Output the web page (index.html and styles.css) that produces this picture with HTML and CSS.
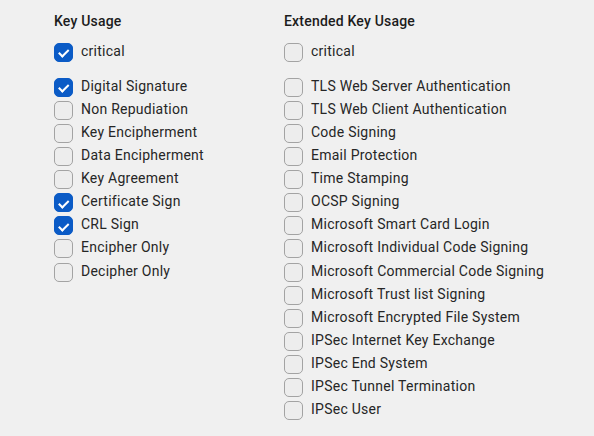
FILE: index.html
```html
<!DOCTYPE html>
<html>
<head>
<meta charset="utf-8">
<link rel="stylesheet" href="styles.css">
</head>
<body>
<div class="page">
  <section class="col col-left">
    <h2 class="title">Key Usage</h2>
    <label class="row crit"><span class="cb on"></span><span class="lbl">critical</span></label>
    <label class="row"><span class="cb on"></span><span class="lbl">Digital Signature</span></label>
    <label class="row"><span class="cb"></span><span class="lbl">Non Repudiation</span></label>
    <label class="row"><span class="cb"></span><span class="lbl">Key Encipherment</span></label>
    <label class="row"><span class="cb"></span><span class="lbl">Data Encipherment</span></label>
    <label class="row"><span class="cb"></span><span class="lbl">Key Agreement</span></label>
    <label class="row"><span class="cb on"></span><span class="lbl">Certificate Sign</span></label>
    <label class="row"><span class="cb on"></span><span class="lbl">CRL Sign</span></label>
    <label class="row"><span class="cb"></span><span class="lbl">Encipher Only</span></label>
    <label class="row"><span class="cb"></span><span class="lbl">Decipher Only</span></label>
  </section>
  <section class="col col-right">
    <h2 class="title">Extended Key Usage</h2>
    <label class="row crit"><span class="cb"></span><span class="lbl">critical</span></label>
    <label class="row"><span class="cb"></span><span class="lbl">TLS Web Server Authentication</span></label>
    <label class="row"><span class="cb"></span><span class="lbl">TLS Web Client Authentication</span></label>
    <label class="row"><span class="cb"></span><span class="lbl">Code Signing</span></label>
    <label class="row"><span class="cb"></span><span class="lbl">Email Protection</span></label>
    <label class="row"><span class="cb"></span><span class="lbl">Time Stamping</span></label>
    <label class="row"><span class="cb"></span><span class="lbl">OCSP Signing</span></label>
    <label class="row"><span class="cb"></span><span class="lbl">Microsoft Smart Card Login</span></label>
    <label class="row"><span class="cb"></span><span class="lbl">Microsoft Individual Code Signing</span></label>
    <label class="row"><span class="cb"></span><span class="lbl">Microsoft Commercial Code Signing</span></label>
    <label class="row"><span class="cb"></span><span class="lbl">Microsoft Trust list Signing</span></label>
    <label class="row"><span class="cb"></span><span class="lbl">Microsoft Encrypted File System</span></label>
    <label class="row"><span class="cb"></span><span class="lbl">IPSec Internet Key Exchange</span></label>
    <label class="row"><span class="cb"></span><span class="lbl">IPSec End System</span></label>
    <label class="row"><span class="cb"></span><span class="lbl">IPSec Tunnel Termination</span></label>
    <label class="row"><span class="cb"></span><span class="lbl">IPSec User</span></label>
  </section>
</div>
</body>
</html>
```
FILE: styles.css
```css
html, body {
  margin: 0;
  padding: 0;
  background: #f0f0f0;
}
body {
  font-family: Roboto, "Liberation Sans", sans-serif;
  font-size: 14px;
  color: #262626;
  width: 594px;
  height: 436px;
  overflow: hidden;
}
.page {
  display: flex;
  padding: 11px 0 0 54px;
}
.col {
  display: flex;
  flex-direction: column;
}
.col-left {
  width: 230px;
}
.title {
  margin: 0 0 8px 0;
  font-size: 14px;
  font-weight: 500;
  line-height: 20px;
  color: #1c1c1c;
  letter-spacing: 0.2px;
}
.row {
  display: flex;
  align-items: center;
  height: 23.12px;
  gap: 8px;
}
.row.crit {
  margin-bottom: 12px;
}
.cb {
  box-sizing: border-box;
  width: 19px;
  height: 19px;
  margin-top: 3px;
  border: 1px solid #a3a3a3;
  border-radius: 5px;
  background: #ededed;
  flex: none;
  position: relative;
}
.cb.on {
  background: #0b5bc6;
  border-color: #0b5bc6;
}
.cb.on::after {
  content: "";
  position: absolute;
  left: 6px;
  top: 3.5px;
  width: 3.5px;
  height: 7.5px;
  border: solid #fff;
  border-width: 0 2px 2px 0;
  transform: rotate(45deg);
}
.lbl {
  letter-spacing: 0.25px;
  line-height: 20px;
}
```
